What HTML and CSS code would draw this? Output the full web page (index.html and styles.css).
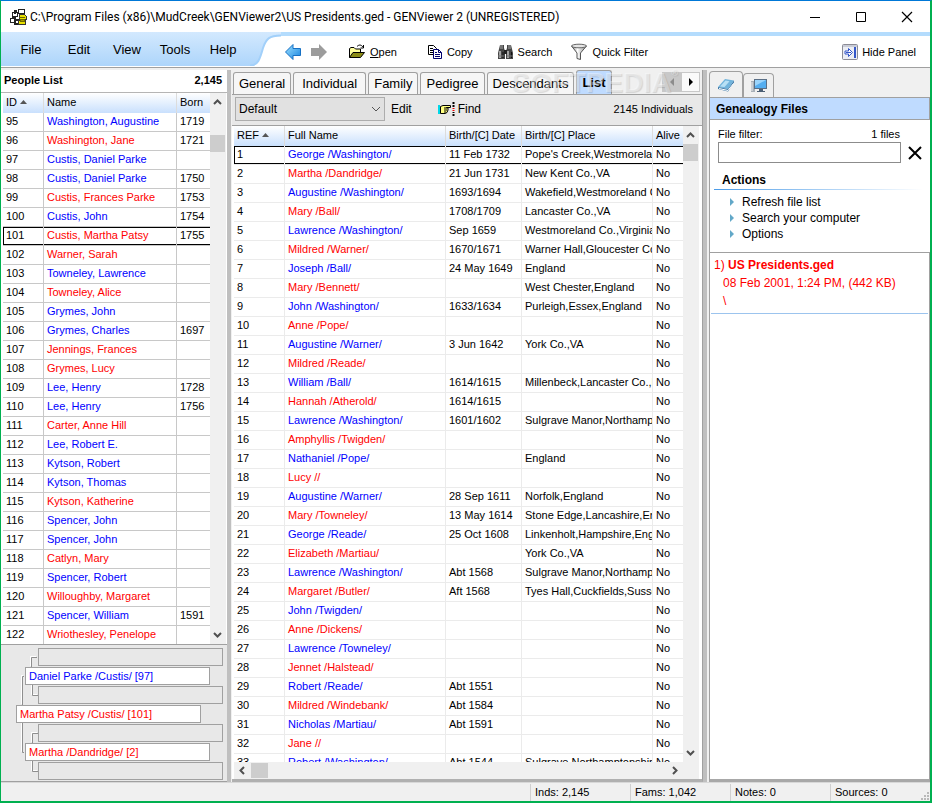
FILE: index.html
```
<!DOCTYPE html>
<html lang="en">
<head>
    <meta charset="UTF-8">
    <meta name="viewport" content="width=device-width, initial-scale=1.0">
    <title>GENViewer 2</title>
    <link rel="stylesheet" href="styles.css">
</head>
<body>
    <div class="window">
        <header class="titlebar">
            <svg class="app-icon" width="18" height="18" viewBox="0 0 18 18" shape-rendering="crispEdges">
                <path d="M3 4h5v4H3zM9 1h6v4H9zM1 10h5v4H1z" fill="#fff" stroke="#222"/>
                <path d="M8 3H6v3M6 8v4h4M4 8v2M6 12v4h4" fill="none" stroke="#222" stroke-width="2"/>
                <path d="M10 6h5l2 2v3h-7zM9 12h7v4H9z" fill="#e8e000" stroke="#333"/>
                <path d="M10 9h6M11 11h4v2h-4z" fill="#a09800" stroke="#6c6800"/>
            </svg>
            <h1 class="title">C:\Program Files (x86)\MudCreek\GENViewer2\US Presidents.ged - GENViewer 2 (UNREGISTERED)</h1>
            <button class="win-btn" aria-label="Minimize"><svg width="12" height="12"><path d="M1 6.500h10" stroke="#000"/></svg></button>
            <button class="win-btn" aria-label="Maximize"><svg width="12" height="12"><path d="M1.500 1.500h9v9h-9z" fill="none" stroke="#000"/></svg></button>
            <button class="win-btn" aria-label="Close"><svg width="12" height="12"><path d="M1 1l10 10M11 1L1 11" stroke="#000" stroke-width="1.200"/></svg></button>
        </header>

        <div class="commandbar">
            <nav class="menu">
                <a href="#">File</a>
                <a href="#">Edit</a>
                <a href="#">View</a>
                <a href="#">Tools</a>
                <a href="#">Help</a>
            </nav>
            <svg class="curve" width="34" height="34" viewBox="0 0 34 34">
                <defs>
                    <linearGradient id="bar" x1="0" y1="0" x2="0" y2="1">
                        <stop offset="0" stop-color="#d3e9fe"/>
                        <stop offset="1" stop-color="#add5fb"/>
                    </linearGradient>
                </defs>
                <path d="M0 0H34V4C22 4 19 7 16 16C13 27 11 34 4 34H0Z" fill="url(#bar)"/>
                <path d="M34 3.500C22 3.500 19 7 16 16C13 27 11 33.500 3 33.500" fill="none" stroke="#a2d0fa" stroke-width="2"/>
            </svg>
            <div class="toolbar">
                <button class="tool back" aria-label="Back">
                    <svg width="18" height="18" viewBox="0 0 18 18"><defs><linearGradient id="arr" x1="0" y1="0" x2="1" y2="1"><stop offset="0" stop-color="#9fe2ff"/><stop offset="1" stop-color="#1583e0"/></linearGradient></defs><path d="M1.500 9L9 1.500V5.500H16.500V12.500H9V16.500Z" fill="url(#arr)" stroke="#1670c4"/></svg>
                </button>
                <button class="tool forward" aria-label="Forward">
                    <svg width="18" height="18" viewBox="0 0 18 18"><path d="M17 9L9 1V5H1V13H9V17Z" fill="#9c9c9c"/></svg>
                </button>
                <button class="tool open">
                    <svg width="18" height="16" viewBox="0 0 18 16"><path d="M1.500 13.500V4.500L3 3.500h3L7.500 5h5v3" fill="#ffff9a" stroke="#000"/><path d="M1.500 13.500L5 8.500h11.500L12.500 13.500z" fill="#8b8b14" stroke="#000"/><path d="M9 2.500C11 0.500 13 0.500 15 3M15.500 1v3h-3" fill="none" stroke="#000"/></svg>
                    <span><u>O</u>pen</span>
                </button>
                <button class="tool copy">
                    <svg width="16" height="16" viewBox="0 0 16 16"><path d="M1.500 1.500h5l3 3v6h-8z" fill="#fff" stroke="#000"/><path d="M3 4.500h3M3 6.500h3M3 8.500h3" stroke="#000"/><path d="M6.500 5.500h5l3 3v6h-8z" fill="#fff" stroke="#00006e"/><path d="M11.500 5.500v3h3M8 8.500h2M8 10.500h5M8 12.500h5" fill="none" stroke="#00006e"/></svg>
                    <span>Copy</span>
                </button>
                <button class="tool search">
                    <svg width="17" height="17" viewBox="0 0 17 17"><path d="M3 1h4v3l1 3v8H1V9zM10 1h4l2 8v6H9V7l1-3z" fill="#454545"/><path d="M7 6h3v4H7z" fill="#222"/><path d="M3 2h3M11 2h3M3 4h3M11 4h3" stroke="#aaa"/><path d="M3 7v7M11 7v7" stroke="#c4c4c4" stroke-width="1.500"/><path d="M6 8v6M14.500 8v6" stroke="#111"/><path d="M1 12h6M10 12h6" stroke="#777"/></svg>
                    <span>Search</span>
                </button>
                <button class="tool filter">
                    <svg width="18" height="18" viewBox="0 0 18 18"><defs><linearGradient id="fun"><stop offset="0" stop-color="#777"/><stop offset=".4" stop-color="#fff"/><stop offset="1" stop-color="#888"/></linearGradient></defs><path d="M1.500 3L7 10v5.500l3.500 1V10L16.500 3z" fill="url(#fun)" stroke="#555"/><ellipse cx="9" cy="3" rx="7.500" ry="1.800" fill="#e6e6e6" stroke="#666"/></svg>
                    <span>Quick Filter</span>
                </button>
                <button class="tool hide">
                    <svg width="16" height="16" viewBox="0 0 16 16"><rect x=".5" y=".5" width="15" height="15" rx="1" fill="#eceef4" stroke="#8b8b95"/><path d="M13 3v11" stroke="#3456c8" stroke-width="2"/><path d="M1 2h14" stroke="#a5a9b8"/><path d="M3 7h3.500V4.500L10.500 8.500L6.500 12.500V10H3z" fill="#fff" stroke="#3456c8"/><path d="M4 8.500h5" stroke="#3456c8"/></svg>
                    <span>Hide Panel</span>
                </button>
            </div>
        </div>

        <main class="panes">
            <section class="people">
                <div class="people-head"><h2>People List</h2><b>2,145</b></div>
                <div class="grid-wrap people-grid">
                    <div class="grid-view">
                        <table class="grid grid-people">
                            <colgroup><col class="c-id"><col><col class="c-born"></colgroup>
                            <thead><tr><th>ID <svg class="sort" width="7" height="4"><path d="M0 4L3.500 0L7 4z"/></svg></th><th>Name</th><th>Born</th></tr></thead>
                            <tbody id="peopleRows"></tbody>
                        </table>
                    </div>
                    <div class="vscroll">
                        <svg class="arrow" width="9" height="6"><path d="M1 5l3.500-3.500L8 5"/></svg>
                        <i class="thumb"></i>
                        <svg class="arrow" width="9" height="6"><path d="M1 1l3.500 3.500L8 1"/></svg>
                    </div>
                </div>
                <div class="pedigree">
                    <svg class="lines" width="228" height="138" viewBox="0 0 228 138">
                        <path d="M37 12.500H31.500V22M24 31.500H22.500V60M32.500 39V50.500H38M22.500 78V107.500H24M38 88.500H32.500V98M32.500 115V126.500H38" fill="none" stroke="#fff" transform="translate(-1 -1)"/>
                        <path d="M37 12.500H31.500V22M24 31.500H22.500V60M32.500 39V50.500H38M22.500 78V107.500H24M38 88.500H32.500V98M32.500 115V126.500H38" fill="none" stroke="#8e8e8e"/>
                    </svg>
                    <div class="slot empty"></div>
                    <div class="slot parent male">Daniel Parke /Custis/ [97]</div>
                    <div class="slot empty"></div>
                    <div class="slot self female">Martha Patsy /Custis/ [101]</div>
                    <div class="slot empty"></div>
                    <div class="slot parent female">Martha /Dandridge/ [2]</div>
                    <div class="slot empty"></div>
                </div>
            </section>

            <section class="detail">
                <div class="tabs">
                    <button class="tab">General</button>
                    <button class="tab tab-wide">Individual</button>
                    <button class="tab">Family</button>
                    <button class="tab">Pedigree</button>
                    <button class="tab">Descendants</button>
                    <button class="tab active">List</button>
                    <div class="tab-scroll">
                        <button disabled aria-label="Scroll tabs left"><svg width="6" height="8"><path d="M5 0L1 4l4 4z" fill="#8c8c8c"/></svg></button>
                        <button aria-label="Scroll tabs right"><svg width="6" height="8"><path d="M1 0l4 4l-4 4z" fill="#000"/></svg></button>
                    </div>
                    <span class="watermark">SOFTPEDIA<small>®</small></span>
                </div>
                <div class="listbar">
                    <div class="picker">
                        <select aria-label="List layout"><option>Default</option></select>
                        <svg width="10" height="6"><path d="M1 1l4 4l4-4" fill="none" stroke="#555"/></svg>
                    </div>
                    <button class="flat">Edit</button>
                    <button class="flat find">
                        <svg width="18" height="14" viewBox="0 0 18 14"><path d="M1 3v9" stroke="#00d8e8" stroke-width="2"/><path d="M2.500 4.500L5 3.500H12.500V5.500H8.500L10 6v2L9 10.500L7 11.500H2.500z" fill="#ffff80" stroke="#000"/><path d="M6 6h3M6 8h3M6 10h2" stroke="#000"/><path d="M15.500 0v2M15.500 3v2M15.500 10v1M15.500 12v2" stroke="#000" stroke-width="2"/><path d="M15.500 6v1M15.500 8v1" stroke="#e00" stroke-width="2"/></svg>
                        Find
                    </button>
                    <span class="count">2145 Individuals</span>
                </div>
                <div class="grid-wrap list-grid">
                    <div class="grid-view">
                        <table class="grid grid-list">
                            <colgroup><col class="c-ref"><col><col class="c-date"><col class="c-place"><col class="c-alive"></colgroup>
                            <thead><tr><th>REF <svg class="sort" width="7" height="4"><path d="M0 4L3.500 0L7 4z"/></svg></th><th>Full Name</th><th>Birth/[C] Date</th><th>Birth/[C] Place</th><th>Alive</th></tr></thead>
                            <tbody id="listRows"></tbody>
                        </table>
                    </div>
                    <div class="vscroll">
                        <svg class="arrow" width="9" height="6"><path d="M1 5l3.500-3.500L8 5"/></svg>
                        <i class="thumb"></i>
                        <svg class="arrow" width="9" height="6"><path d="M1 1l3.500 3.500L8 1"/></svg>
                    </div>
                </div>
                <div class="hscroll">
                    <svg class="arrow" width="6" height="9"><path d="M5 1L1.500 4.500L5 8"/></svg>
                    <i class="thumb"></i>
                    <svg class="arrow" width="6" height="9"><path d="M1 1l3.500 3.500L1 8"/></svg>
                </div>
            </section>

            <aside class="files">
                <div class="file-tabs">
                    <button class="file-tab active" aria-label="Files"><svg width="18" height="16" viewBox="0 0 18 16"><path d="M1 10L8 2l9 1.500L11 12z" fill="#71b4dc"/><path d="M3 9.500L8.500 3.500l4 .7L7.500 10z" fill="#b8e0f5"/><path d="M1 10l10 2l6-8.500v2L11 14.500L1 12z" fill="#3c78a8"/><path d="M2 11.500l9 2l5.500-7" fill="none" stroke="#fff"/></svg></button>
                    <button class="file-tab" aria-label="Computer"><svg width="18" height="16" viewBox="0 0 18 16"><path d="M1 3h4v11H1z" fill="#a8b0b8"/><path d="M2 4v9" stroke="#eee"/><rect x="4.500" y="1.500" width="12" height="9" fill="#55aef0" stroke="#5a6f86"/><path d="M5 2h11L5 8z" fill="#9bd4fb"/><path d="M9 11h4v2h2v1H7v-1h2z" fill="#4c5f74"/></svg></button>
                </div>
                <h2 class="files-title">Genealogy Files</h2>
                <div class="files-body">
                    <div class="filter-head"><label for="fileFilter">File filter:</label><span>1 files</span></div>
                    <div class="filter-row">
                        <input type="text" id="fileFilter">
                        <button class="clear" aria-label="Clear filter"><svg width="14" height="14"><path d="M1 1l12 12M13 1L1 13" stroke="#000" stroke-width="2"/></svg></button>
                    </div>
                    <h3>Actions</h3>
                    <ul class="actions">
                        <li><a href="#">Refresh file list</a></li>
                        <li><a href="#">Search your computer</a></li>
                        <li><a href="#">Options</a></li>
                    </ul>
                </div>
                <div class="file-list">
                    <div class="file">
                        <div>1) <b>US Presidents.ged</b></div>
                        <div class="sub">08 Feb 2001, 1:24 PM, (442 KB)</div>
                        <div class="sub">\</div>
                    </div>
                </div>
            </aside>
        </main>

        <footer class="statusbar">
            <span></span>
            <span>Inds: 2,145</span>
            <span>Fams: 1,042</span>
            <span>Notes: 0</span>
            <span>Sources: 0</span>
            <svg class="grip" width="9" height="9"><path d="M6 0h2v2H6zM3 3h2v2H3zM6 3h2v2H6zM0 6h2v2H0zM3 6h2v2H3zM6 6h2v2H6z" fill="#b8b8b8"/></svg>
        </footer>
    </div>
    <script src="script.js"></script>
</body>
</html>
```
FILE: styles.css
```
* {
    box-sizing: border-box;
}

body {
    margin: 0;
    font-family: "Liberation Sans", Arial, sans-serif;
    font-size: 11px;
    color: #000;
    background: #f0f0f0;
}

button {
    font: inherit;
    color: inherit;
    padding: 0;
    border: 0;
    background: none;
}

a {
    color: inherit;
    text-decoration: none;
}

h1, h2, h3, ul {
    margin: 0;
    padding: 0;
    font-size: 11px;
}

svg {
    flex: none;
}

.window {
    display: flex;
    flex-direction: column;
    height: 100vh;
    border: 1px solid #00b050;
    border-top-color: #0078d7;
    border-bottom-width: 2px;
    border-right-width: 2px;
}

/* title bar */
.titlebar {
    display: flex;
    align-items: center;
    height: 31px;
    padding-left: 8px;
    background: #fff;
    flex: none;
}

.title {
    flex: 1;
    margin-left: 3px;
    font-family: Roboto, "Open Sans", sans-serif;
    font-size: 12px;
    line-height: 16px;
    font-weight: normal;
    white-space: nowrap;
}

.win-btn {
    display: flex;
    align-items: center;
    justify-content: center;
    width: 46px;
    height: 29px;
}

/* menu and toolbar */
.commandbar {
    display: flex;
    flex: none;
    height: 36px;
    background: #fff;
    border-bottom: 1px solid #a0a0a0;
}

.menu {
    display: flex;
    align-items: center;
    height: 34px;
    padding-left: 6px;
    background: linear-gradient(#d3e9fe, #add5fb);
}

.menu a {
    width: 48px;
    text-align: center;
    font-size: 13px;
}

.toolbar {
    display: flex;
    align-items: center;
    flex: 1;
    height: 34px;
    border-top: 4px solid #b4dcfd;
    padding: 2px 14px 0 0;
}

.tool {
    display: flex;
    align-items: center;
    gap: 4px;
    white-space: nowrap;
}

.back {
    margin-left: 3px;
}

.forward {
    margin-left: 8px;
}

.open {
    margin-left: 20px;
}

.copy {
    margin-left: 30px;
}

.search {
    margin-left: 24px;
}

.filter {
    margin-left: 18px;
}

.hide {
    margin-left: auto;
}

/* panes */
.panes {
    display: flex;
    flex: 1;
    min-height: 0;
    padding-top: 2px;
    background: #f0f0f0;
}

.people {
    display: flex;
    flex-direction: column;
    width: 230px;
    border-right: 4px solid #bfbfbf;
    background: #fff;
}

.people-head {
    display: flex;
    align-items: center;
    justify-content: space-between;
    flex: none;
    height: 23px;
    padding: 0 5px 2px 3px;
    border-bottom: 1px solid #b5b5b5;
}

.grid-wrap {
    display: flex;
    flex: 1;
    min-height: 0;
}

.people-grid {
    border-bottom: 1px solid #a0a0a0;
    padding: 0 1px 0 2px;
}

.grid-view {
    flex: 1;
    min-width: 0;
    overflow: hidden;
}

.grid {
    width: 100%;
    table-layout: fixed;
    border-collapse: separate;
    border-spacing: 0;
}

.grid th {
    height: 20px;
    padding: 0 3px 2px;
    font-weight: normal;
    text-align: left;
    white-space: nowrap;
    background: linear-gradient(#fff, #c9e0fd);
    border-right: 1px solid #dcdcdc;
}

.grid td {
    height: 19px;
    padding: 0 3px 2px;
    line-height: 14px;
    white-space: nowrap;
    overflow: hidden;
    border-right: 1px solid #ebebeb;
    border-bottom: 1px solid #ebebeb;
}

.grid-people td {
    border-color: #c8c8c8;
}

.grid th:last-child,
.grid td:last-child {
    border-right: 0;
}

.grid .current td {
    box-shadow: inset 0 1px #000, inset 0 -1px #000;
}

.grid .current td:first-child {
    box-shadow: inset 0 1px #000, inset 0 -1px #000, inset 1px 0 #000;
}

.sort {
    fill: #555;
    vertical-align: 2px;
}

.male {
    color: #00f;
}

.female {
    color: #f00;
}

.c-id {
    width: 41px;
}

.c-born {
    width: 33px;
}

.c-ref {
    width: 51px;
}

.c-date {
    width: 76px;
}

.c-place {
    width: 131px;
}

.c-alive {
    width: 30px;
}

/* scroll bars */
.vscroll {
    display: flex;
    flex-direction: column;
    align-items: center;
    width: 16px;
    padding: 6px 1px 6px 0;
    background: #f0f0f0;
}

.hscroll {
    display: flex;
    align-items: center;
    flex: none;
    height: 17px;
    padding: 0 21px 0 5px;
    background: #f0f0f0;
}

.arrow {
    fill: none;
    stroke: #505050;
    stroke-width: 2;
}

.arrow:last-child {
    margin-top: auto;
}

.thumb {
    width: 15px;
    height: 17px;
    background: #cdcdcd;
}

.list-grid .thumb {
    margin-top: 6px;
}

.people-grid .thumb {
    margin-top: 30px;
}

.hscroll .thumb {
    width: 17px;
    height: 15px;
    margin-left: 6px;
}

.hscroll .arrow:last-child {
    margin: 0 0 0 auto;
}

/* small pedigree tree */
.pedigree {
    position: relative;
    display: flex;
    flex-direction: column;
    gap: 1px;
    flex: none;
    height: 137px;
    padding-top: 3px;
    background: #e8e8e8;
    border-bottom: 1px solid #a0a0a0;
}

.lines {
    position: absolute;
    left: -1px;
    top: 0;
}

.slot {
    position: relative;
    flex: none;
    width: 185px;
    height: 18px;
    padding-left: 3px;
    line-height: 16px;
    white-space: nowrap;
    background: #fff;
    border: 1px solid #a0a0a0;
}

.empty {
    margin-left: 37px;
    background: #e8e8e8;
}

.parent {
    margin-left: 24px;
}

.self {
    margin-left: 15px;
}

/* centre pane */
.detail {
    display: flex;
    flex-direction: column;
    flex: 1;
    min-width: 0;
    margin-left: 1px;
    border-right: 1px solid #a0a0a0;
    border-bottom: 3px solid #b0b0b0;
    background: #fff;
}

.tabs {
    position: relative;
    display: flex;
    align-items: flex-end;
    gap: 2px;
    flex: none;
    height: 25px;
    padding-left: 1px;
    background: #f0f0f0;
    border-bottom: 1px solid #a0a0a0;
}

.tab {
    height: 22px;
    padding: 0 5px;
    font-size: 13px;
    background: #f6f6f6;
    border: 1px solid #a0a0a0;
    border-bottom: 0;
    border-radius: 3px 3px 0 0;
}

.tab-wide {
    padding: 0 8px;
}

.tab.active {
    height: 24px;
    font-weight: bold;
    background: #bfdbff;
}

.tab-scroll {
    display: flex;
    margin: 0 2px 2px auto;
}

.tab-scroll button {
    display: flex;
    align-items: center;
    justify-content: center;
    width: 19px;
    height: 20px;
    background: #fafafa;
    border: 1px solid #c8c8c8;
}

.tab-scroll button:disabled {
    background: #c8c8c8;
}

.watermark {
    position: absolute;
    left: 279px;
    top: -1px;
    font-size: 28px;
    line-height: 28px;
    font-weight: bold;
    color: rgba(255, 255, 255, 0.4);
    text-shadow: 1px 1px 1px rgba(0, 0, 0, 0.12);
    pointer-events: none;
}

.watermark small {
    font-size: 9px;
    vertical-align: top;
    line-height: 9px;
}

.listbar {
    display: flex;
    align-items: center;
    flex: none;
    height: 31px;
    padding: 0 9px 2px 3px;
    font-size: 12px;
    background: #e8e8e8;
    border-bottom: 1px solid #a0a0a0;
}

.picker {
    display: flex;
    align-items: center;
    width: 150px;
}

.picker select {
    flex: 1;
    height: 24px;
    padding: 0 3px;
    font: inherit;
    font-size: 12px;
    appearance: none;
    color: #000;
    background: #e1e1e1;
    border: 1px solid #adadad;
    border-radius: 0;
}

.picker svg {
    margin-left: -14px;
    margin-right: 4px;
}

.flat {
    display: flex;
    align-items: center;
    gap: 2px;
    margin-left: 6px;
}

.find {
    margin-left: 26px;
}

.count {
    margin-left: auto;
    font-size: 11px;
}

.list-grid,
.hscroll {
    margin: 0 3px 0 2px;
}

/* files pane */
.files {
    display: flex;
    flex-direction: column;
    width: 227px;
    border-left: 4px solid #bfbfbf;
}

.files > * {
    margin-left: 2px;
}

.file-tabs {
    display: flex;
    align-items: flex-end;
    flex: none;
    height: 27px;
}

.file-tab {
    display: flex;
    align-items: center;
    justify-content: center;
    width: 31px;
    height: 24px;
    border: 1px solid #a0a0a0;
    border-bottom: 0;
    border-radius: 4px 4px 0 0;
}

.file-tab.active {
    width: 34px;
    height: 26px;
}

.files-title {
    flex: none;
    height: 23px;
    padding-left: 6px;
    font-size: 12px;
    line-height: 23px;
    background: #bfdbff;
    border: 1px solid #a0a0a0;
}

.files-body {
    flex: none;
    height: 132px;
    padding: 8px 8px 0 8px;
    background: #fff;
    border-left: 1px solid #a0a0a0;
}

.filter-head {
    display: flex;
    justify-content: space-between;
    padding-right: 22px;
    line-height: 13px;
}

.filter-row {
    display: flex;
    align-items: center;
    justify-content: space-between;
    margin-top: 1px;
}

.filter-row input {
    width: 183px;
    height: 21px;
    border: 1px solid #8c8c8c;
}

.clear {
    display: flex;
}

.files-body h3 {
    margin: 6px 0 0 -4px;
    padding: 4px 0 2px 8px;
    font-size: 12px;
    line-height: 14px;
    border-bottom: 1px solid;
    border-image: linear-gradient(to right, #4a9be8, #fff) 1;
}

.actions {
    margin-top: 4px;
    padding-left: 12px;
    list-style: none;
    font-size: 12px;
    line-height: 16px;
}

.actions li {
    display: flex;
    align-items: center;
    gap: 8px;
}

.actions li::before {
    content: "";
    border-left: 4px solid #62a8c8;
    border-top: 4px solid transparent;
    border-bottom: 4px solid transparent;
}

.file-list {
    flex: 1;
    padding: 0 1px;
    background: #fff;
    border: 1px solid #a0a0a0;
    border-bottom: 3px solid #a8a8a8;
}

.file {
    padding: 3px;
    font-size: 12px;
    line-height: 18px;
    color: #f00;
    border-bottom: 1px solid #9cc4ee;
}

.sub {
    padding-left: 9px;
}

/* status bar */
.statusbar {
    display: flex;
    align-items: center;
    flex: none;
    height: 19px;
    background: #f0f0f0;
    border-top: 1px solid #d8d8d8;
}

.statusbar span {
    width: 100px;
    padding-left: 4px;
    line-height: 17px;
    border-left: 1px solid #d0d0d0;
}

.statusbar span:first-child {
    flex: 1;
    border-left: 0;
}

.grip {
    align-self: flex-end;
    margin-left: -9px;
}
```
FILE: script.js
```
// id, name, sex, born
const people = `95|Washington, Augustine|m|1719
96|Washington, Jane|f|1721
97|Custis, Daniel Parke|m|
98|Custis, Daniel Parke|m|1750
99|Custis, Frances Parke|f|1753
100|Custis, John|m|1754
101|Custis, Martha Patsy|f|1755
102|Warner, Sarah|f|
103|Towneley, Lawrence|m|
104|Towneley, Alice|f|
105|Grymes, John|m|
106|Grymes, Charles|m|1697
107|Jennings, Frances|f|
108|Grymes, Lucy|f|
109|Lee, Henry|m|1728
110|Lee, Henry|m|1756
111|Carter, Anne Hill|f|
112|Lee, Robert E.|m|
113|Kytson, Robert|m|
114|Kytson, Thomas|m|
115|Kytson, Katherine|f|
116|Spencer, John|m|
117|Spencer, John|m|
118|Catlyn, Mary|f|
119|Spencer, Robert|m|
120|Willoughby, Margaret|f|
121|Spencer, William|m|1591
122|Wriothesley, Penelope|f|`;

// name, sex, birth date, birth place
const individuals = `George /Washington/|m|11 Feb 1732|Pope's Creek,Westmoreland Co.,VA
Martha /Dandridge/|f|21 Jun 1731|New Kent Co.,VA
Augustine /Washington/|m|1693/1694|Wakefield,Westmoreland Co.,VA
Mary /Ball/|f|1708/1709|Lancaster Co.,VA
Lawrence /Washington/|m|Sep 1659|Westmoreland Co.,Virginia
Mildred /Warner/|f|1670/1671|Warner Hall,Gloucester Co.,VA
Joseph /Ball/|m|24 May 1649|England
Mary /Bennett/|f||West Chester,England
John /Washington/|m|1633/1634|Purleigh,Essex,England
Anne /Pope/|f||
Augustine /Warner/|m|3 Jun 1642|York Co.,VA
Mildred /Reade/|f||
William /Ball/|m|1614/1615|Millenbeck,Lancaster Co.,England
Hannah /Atherold/|f|1614/1615|
Lawrence /Washington/|m|1601/1602|Sulgrave Manor,Northamptonshire
Amphyllis /Twigden/|f||
Nathaniel /Pope/|m||England
Lucy //|f||
Augustine /Warner/|m|28 Sep 1611|Norfolk,England
Mary /Towneley/|f|13 May 1614|Stone Edge,Lancashire,England
George /Reade/|m|25 Oct 1608|Linkenholt,Hampshire,England
Elizabeth /Martiau/|f||York Co.,VA
Lawrence /Washington/|m|Abt 1568|Sulgrave Manor,Northamptonshire
Margaret /Butler/|f|Aft 1568|Tyes Hall,Cuckfields,Sussex
John /Twigden/|m||
Anne /Dickens/|f||
Lawrence /Towneley/|m||
Jennet /Halstead/|f||
Robert /Reade/|m|Abt 1551|
Mildred /Windebank/|f|Abt 1584|
Nicholas /Martiau/|m|Abt 1591|
Jane //|f||
Robert /Washington/|m|Abt 1544|Sulgrave,Northamptonshire`;

const sexClass = (sex) => (sex === "m" ? "male" : "female");

document.getElementById("peopleRows").innerHTML = people.split("\n").map((line) => {
    const [id, name, sex, born] = line.split("|");
    return `<tr${id === "101" ? ' class="current"' : ""}><td>${id}</td><td class="${sexClass(sex)}">${name}</td><td>${born}</td></tr>`;
}).join("");

document.getElementById("listRows").innerHTML = individuals.split("\n").map((line, i) => {
    const [name, sex, date, place] = line.split("|");
    return `<tr${i === 0 ? ' class="current"' : ""}><td>${i + 1}</td><td class="${sexClass(sex)}">${name}</td><td>${date}</td><td>${place}</td><td>No</td></tr>`;
}).join("");
```
